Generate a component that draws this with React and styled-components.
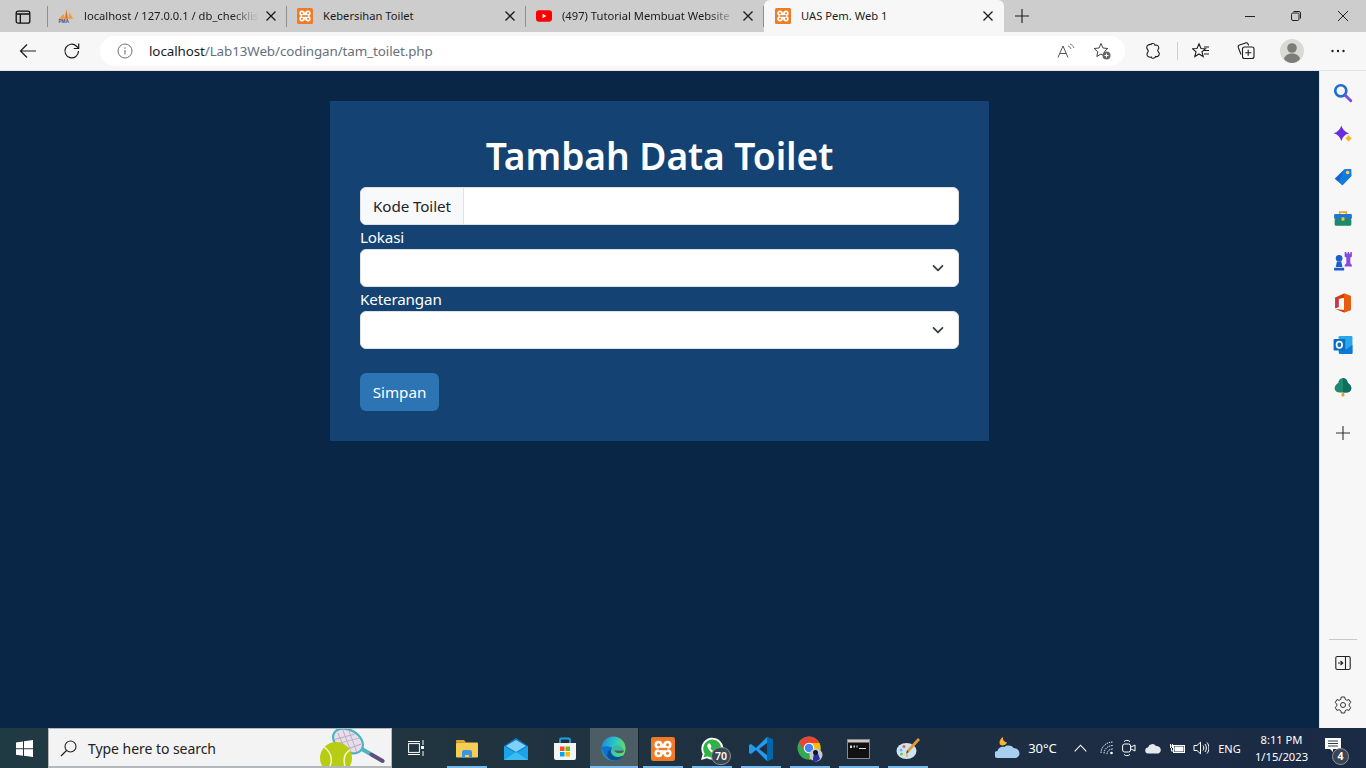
import React from "react";
import styled, { createGlobalStyle } from "styled-components";

const UI = '"Noto Sans", "Open Sans", sans-serif';

const Global = createGlobalStyle`
  html, body { margin: 0; padding: 0; height: 100%; overflow: hidden; }
  body { font-family: ${UI}; background: #0a2647; }
  * { box-sizing: border-box; }
`;

const Screen = styled.div`
  width: 1366px; height: 768px; display: flex; flex-direction: column; overflow: hidden;
`;

/* ---------- tab strip ---------- */
const TabStrip = styled.div`
  height: 32px; flex: none; background: #cdcdcd; display: flex; align-items: stretch; color: #1a1a1a;
`;
const TabMenu = styled.div`
  width: 48px; flex: none; display: flex; align-items: center; justify-content: center; padding-right: 1px;
  border-right: 1px solid #8e8e8e; margin: 6px 0 5px;
`;
const TabSlot = styled.div`
  width: ${p => p.$w}px; flex: none; height: 32px; display: flex; align-items: center; position: relative;
  padding: 0 10px 0 ${p => p.$pl}px; font-size: 11.2px;
  ${p => p.$active ? `background: #f7f7f7; border-radius: 6px 6px 0 0;` : ""}
  ${p => p.$sep ? `
    &::after { content: ""; position: absolute; right: 0; top: 6px; bottom: 5px; width: 1px; background: #8e8e8e; }
  ` : ""}
`;
const FavIcon = styled.span`
  width: 16px; height: 16px; flex: none; display: flex; align-items: center; justify-content: center; margin-right: 10px;
`;
const TabTitle = styled.span`
  flex: 1; min-width: 0; white-space: nowrap; overflow: hidden; padding-bottom: 2px;
  ${p => p.$fade ? `mask-image: linear-gradient(90deg, #000 84%, transparent 100%);` : ""}
`;
const CloseBox = styled.span`
  width: 12px; height: 12px; flex: none; display: flex; margin-left: 6px;
`;
const NewTab = styled.div`
  width: 36px; flex: none; display: flex; align-items: center; justify-content: center;
`;
const Spacer = styled.div`flex: 1;`;
const WinButtons = styled.div`display: flex; align-items: center;`;
const WinBtn = styled.div`
  width: 46px; height: 32px; display: flex; align-items: center; justify-content: center;
`;

/* ---------- toolbar ---------- */
const Toolbar = styled.div`
  height: 39px; flex: none; background: #f7f7f7; display: flex; align-items: center; padding: 0 0 1px 8px;
  border-bottom: 1px solid #e4e4e4;
`;
const ToolBtn = styled.div`
  width: ${p => p.$w || 40}px; height: 30px; flex: none; display: flex; align-items: center; justify-content: center;
  margin-left: ${p => p.$ml || 0}px;
`;
const Address = styled.div`
  width: 1025px; height: 30px; flex: none; margin-left: 4px; background: #fff; border-radius: 15px;
  display: flex; align-items: center; padding: 0 14px 0 17px; font-size: 13.4px; letter-spacing: -.09px;
`;
const Host = styled.span`color: #1a1a1a;`;
const Path = styled.span`color: #66707a;`;
const AddressText = styled.div`flex: 1; margin-left: 16px; white-space: nowrap;`;
const ToolSep = styled.div`width: 1px; height: 18px; background: #d0d0d0; flex: none;`;

/* ---------- body ---------- */
const Middle = styled.div`flex: 1; min-height: 0; display: flex;`;
const Page = styled.main`
  flex: 1; min-width: 0; background: #0a2647; display: flex; justify-content: center; align-items: flex-start; padding-top: 30px;
`;
const Card = styled.form`
  width: 659px; background: #144272; padding: 30px; color: #fff;
`;
const Title = styled.h1`
  margin: 0 0 6px; font-size: 37.2px; line-height: 50px; font-weight: 600; text-align: center; letter-spacing: -.08px;
`;
const InputGroup = styled.div`
  display: flex; height: 38px; background: #fff; border: 1px solid #dee2e6; border-radius: 6px; overflow: hidden;
`;
const Addon = styled.span`
  display: flex; align-items: center; padding: 0 12px; background: #f8f9fa; border-right: 1px solid #dee2e6;
  color: #212529; font-size: 15.2px; letter-spacing: -.1px; white-space: nowrap;
`;
const FieldInput = styled.input`flex: 1; border: 0; outline: 0; background: transparent;`;
const Label = styled.label`
  display: block; height: 24px; font-size: 15.2px; line-height: 24px; letter-spacing: -.15px;
`;
const SelectBox = styled.div`
  height: 38px; background: #fff; border: 1px solid #dee2e6; border-radius: 6px; display: flex; align-items: center;
  justify-content: flex-end; padding-right: 14px;
`;
const SubmitBtn = styled.button`
  display: block; margin-top: 24px; height: 38px; width: 79px; background: #2c74b3; border: 0; border-radius: 6px;
  color: #fff; font-family: inherit; font-size: 15.2px; padding: 0;
`;

/* ---------- edge sidebar ---------- */
const Sidebar = styled.aside`
  width: 47px; flex: none; background: #f7f7f7; border-left: 1px solid #e2e2e2; display: flex; flex-direction: column;
  align-items: center; padding: 1px 0 2px;
`;
const SideBtn = styled.div`
  width: 42px; height: 42px; flex: none; display: flex; align-items: center; justify-content: center;
  margin-top: ${p => p.$mt || 0}px;
`;
const SideRule = styled.div`width: 28px; height: 1px; background: #c9c9c9; flex: none; margin-top: auto; margin-bottom: 2px;`;

/* ---------- taskbar ---------- */
const Taskbar = styled.footer`
  height: 40px; flex: none; display: flex; align-items: stretch; color: #fff;
  background: linear-gradient(90deg, #203a44 0%, #20343f 35%, #1e2f42 65%, #1b2a45 100%);
`;
const StartBtn = styled.div`width: 48px; flex: none; display: flex; align-items: center; justify-content: center;`;
const SearchBox = styled.div`
  width: 344px; flex: none; background: #f3f3f3; border: 1px solid #b5b8ba; border-bottom-width: 2px; display: flex; align-items: center;
  padding: 1px 0 0 11px; color: #222; font-size: 14px; position: relative; letter-spacing: -.05px; overflow: hidden;
`;
const SearchText = styled.span`margin-left: 11px;`;
const SearchArt = styled.svg`position: absolute; right: 5px; bottom: 0;`;
const TaskViewBtn = styled.div`width: 51px; padding-right: 3px; flex: none; display: flex; align-items: center; justify-content: center;`;
const AppCell = styled.div`
  width: ${p => p.$active ? 48 : 49}px; flex: none; display: flex; align-items: center; justify-content: center; position: relative;
  padding: 1px 2px 0 0;
  ${p => p.$active ? `background: #4d5d66; box-shadow: 1px 0 0 #16242f; margin-right: 1px;` : ""}
  ${p => p.$open ? `
    &::after { content: ""; position: absolute; bottom: 0; height: 2px; background: #76b9ed;
      left: ${p.$active ? 0 : 4}px; right: ${p.$active ? 0 : 5}px; }
  ` : ""}
`;
const Badge = styled.span`
  position: absolute; left: 23px; bottom: 3px; width: 20px; height: 18px; border-radius: 9px; background: #3a4650;
  border: 1px solid #8a9299; color: #fff; font-size: 10.5px; line-height: 16px; text-align: center; font-weight: 600;
`;
const Tray = styled.div`margin-left: auto; display: flex; align-items: center; height: 100%;`;
const TrayItem = styled.div`
  width: ${p => p.$w}px; flex: none; height: 100%; display: flex; align-items: center; justify-content: center;
  font-size: ${p => p.$fs || 12}px; white-space: nowrap;
  margin-left: ${p => p.$ml || 0}px; margin-right: ${p => p.$mr || 0}px;
`;
const Clock = styled.div`
  width: 81px; flex: none; text-align: center; font-size: 11.2px; line-height: 17px; padding-bottom: 1px;
`;
const NotifyBtn = styled.div`
  width: 39px; flex: none; height: 100%; position: relative; display: flex; align-items: center; justify-content: center;
`;
const NotifyBadge = styled.span`
  position: absolute; right: 12px; bottom: 3px; width: 17px; height: 17px; border-radius: 50%; background: #3b4450; border: 1px solid #8d959c;
  font-size: 10.5px; font-weight: 700; line-height: 15px; text-align: center;
`;
const ShowDesktop = styled.div`width: 5px; flex: none; border-left: 1px solid #6f7a85;`;

/* ---------- icons ---------- */
const Svg = ({ s = 16, w, h, v, children, ...r }) => (
  <svg width={w || s} height={h || s} viewBox={v || `0 0 ${s} ${s}`} fill="none" {...r}>{children}</svg>
);
const Si = ({ children }) => <Svg w={20} h={20} v="0 0 18 18">{children}</Svg>;
const XIcon = () => <Svg s={12}><path d="M1.5 1.5l9 9M10.500 1.500l-9 9" stroke="#1a1a1a" strokeWidth="1.3" /></Svg>;
const Xampp = ({ s = 16 }) => (
  <Svg s={s} v="0 0 16 16">
    <rect width="16" height="16" rx="1.5" fill="#ef7b26" />
    <g fill="#fff">
      <circle cx="5" cy="5.200" r="2.700" /><circle cx="11" cy="5.200" r="2.700" />
      <circle cx="5" cy="10.800" r="2.700" /><circle cx="11" cy="10.800" r="2.700" />
      <rect x="5" y="4.500" width="6" height="7" />
    </g>
    <g fill="#ef7b26">
      <circle cx="5" cy="5.200" r="1" /><circle cx="11" cy="5.200" r="1" />
      <circle cx="5" cy="10.800" r="1" /><circle cx="11" cy="10.800" r="1" />
      <rect x="5" y="7.200" width="6" height="1.600" />
    </g>
  </Svg>
);
const Pma = () => (
  <Svg w={17} h={16} v="0 0 17 16">
    <path d="M1 11l5-5 1 5zM6.500 11L9 1l2 10zM11 11l1-7 4 7z" fill="#f29a2e" />
    <path d="M9 1l1 10H8z" fill="#e2701c" />
    <text x="0.500" y="15.600" fontSize="5" fontWeight="700" fill="#3d4f8a" fontFamily="Liberation Sans">PMA</text>
  </Svg>
);
const Yt = () => (
  <Svg w={17} h={12} v="0 0 17 12">
    <rect width="17" height="12" rx="3" fill="#f00" />
    <path d="M7 3.500L11 6 7 8.500z" fill="#fff" />
  </Svg>
);
const Avatar = () => (
  <Svg s={24}>
    <circle cx="12" cy="12" r="12" fill="#d9d9d6" />
    <circle cx="12" cy="9" r="4.800" fill="#7d7d78" />
    <path d="M4 20c1-4 4.500-5.500 8-5.500s7 1.500 8 5.500c-2 2.500-5 4-8 4s-6-1.500-8-4z" fill="#7d7d78" />
  </Svg>
);
function Chevron() {
  return <Svg s={12}><path d="M1.500 3.800L6 8.300l4.500-4.500" stroke="#343a40" strokeWidth="1.700" strokeLinecap="round" strokeLinejoin="round" /></Svg>;
}

function Tab({ w, pl = 11, icon, title, active, sep, fade }) {
  return (
    <TabSlot $w={w} $pl={pl} $active={active} $sep={sep}>
      <FavIcon>{icon}</FavIcon>
      <TabTitle $fade={fade}>{title}</TabTitle>
      <CloseBox><XIcon /></CloseBox>
    </TabSlot>
  );
}

const stroke = { stroke: "#1c1c1c", strokeWidth: 1.1 };

const SideIcons = [
  <Si key="s">
    <circle cx="7" cy="7" r="5" stroke="#1a6fd8" strokeWidth="2.400" />
    <path d="M11 11l5 5" stroke="#7a4de0" strokeWidth="2.600" strokeLinecap="round" />
  </Si>,
  <Si key="c">
    <path d="M7.500.5Q9 6 14.500 7.500 9 9 7.500 14.500 6 9 .5 7.500 6 6 7.500.5z" fill="#6b2be0" />
    <path d="M14 9.500c.3 1.600.9 2.200 2.500 2.500-1.600.3-2.200.9-2.500 2.500-.3-1.600-.9-2.200-2.500-2.500 1.600-.3 2.200-.9 2.500-2.500z" fill="#f5b21a" stroke="#f5b21a" />
  </Si>,
  <Si key="t">
    <path d="M1.500 10.500L10 2.200l6.300-.5.200 6.500-8 8.300z" fill="#1565cf" />
    <path d="M10 2.200l6.300-.5.200 6.500-8 8.300-3-3z" fill="#0f7de0" />
    <circle cx="13.200" cy="5" r="1.600" fill="#fbd24e" />
  </Si>,
  <Si key="b">
    <path d="M6 5V2.800h6V5" stroke="#e8a92e" strokeWidth="1.400" />
    <rect x="1" y="4.500" width="16" height="4.500" rx="1" fill="#1f78c8" />
    <rect x="1.500" y="9" width="15" height="6" rx="1" fill="#1a8a6a" />
    <rect x="7.700" y="7.500" width="2.600" height="3" fill="#f4c430" />
  </Si>,
  <Si key="g">
    <circle cx="5.500" cy="6.500" r="3" fill="#1a5fcb" />
    <path d="M3.500 9.500h4l1 5H2.500zM1 15h9v2.500H1z" fill="#1a5fcb" />
    <path d="M10.500 1h1.500v1.200h1.200V1h1.200v1.200h1.200V1H17v4l-1.400 1v5l1.400 1.500V14h-6.500v-1.500L12 11V6l-1.500-1z" fill="#8a4ae0" />
  </Si>,
  <Si key="o">
    <path d="M2 4l8-3.500 6 2.200v12.600l-6 2.200-8-3.200 8 1V4.200L5 5.400v7.200L2 13.800z" fill="#d83b01" />
    <path d="M2 4l3 1.400v7.200l-3 1.200z" fill="#c43454" />
    <path d="M10 .5l6 2.200v12.600l-6 2.200z" fill="#ea5a0f" />
  </Si>,
  <Si key="u">
    <rect x="5" y="1" width="12.500" height="15.500" rx="1" fill="#28a8ea" />
    <path d="M5.500 9l6 4 6-4v8h-12z" fill="#0f78d4" />
    <rect x="0.500" y="3.500" width="10.500" height="10.500" rx="1" fill="#0f6cbd" />
    <ellipse cx="5.700" cy="8.800" rx="2.500" ry="2.900" stroke="#fff" strokeWidth="1.500" />
  </Si>,
  <Si key="tr">
    <path d="M9 1c2.500 0 4 2 4.300 4.300 2 1 3.400 3 3.200 5.200-.2 2-2 3.500-4.500 3.500H6c-2.500 0-4.300-1.500-4.500-3.500-.2-2.200 1.200-4.200 3.200-5.200C5 3 6.500 1 9 1z" fill="#1b8a70" />
    <path d="M9 1c2.500 0 4 2 4.300 4.300 2 1 3.400 3 3.200 5.200-.2 2-2 3.500-4.500 3.500H9z" fill="#0f6f5c" />
    <rect x="7.800" y="14" width="2.400" height="3.500" fill="#e8a030" />
  </Si>,
];

const apps = [
  { k: "explorer", open: true, icon: (
    <Svg w={22} h={20} v="0 0 22 20">
      <path d="M0 2a1 1 0 011-1h7l2 2.500H0z" fill="#e6a823" />
      <rect y="3.500" width="22" height="15" rx="1" fill="#f8cd55" />
      <path d="M6 13a2 2 0 012-2h6a2 2 0 012 2v6H13v-3H9v3H6z" fill="#3a96dd" />
    </Svg>) },
  { k: "mail", icon: (
    <Svg w={24} h={24} v="0 0 24 24">
      <path d="M0 9L12 1l12 8v14H0z" fill="#0f78d4" />
      <path d="M2 9l10-6 10 6-10 6z" fill="#7fd0f5" />
      <path d="M0 9l12 7 12-7v14H0z" fill="#19a3e8" />
      <path d="M0 23l12-8 12 8z" fill="#3dbcf2" />
    </Svg>) },
  { k: "store", icon: (
    <Svg w={24} h={24} v="0 0 24 24">
      <path d="M7 6V3a1.500 1.500 0 011.500-1.500h7A1.500 1.500 0 0117 3v3" stroke="#1aa3e0" strokeWidth="1.800" />
      <path d="M1 6h22v15a2 2 0 01-2 2H3a2 2 0 01-2-2z" fill="#f4f4f4" />
      <rect x="7" y="9.500" width="4.500" height="4.500" fill="#f25022" />
      <rect x="12.500" y="9.500" width="4.500" height="4.500" fill="#7fba00" />
      <rect x="7" y="15" width="4.500" height="4.500" fill="#00a4ef" />
      <rect x="12.500" y="15" width="4.500" height="4.500" fill="#ffb900" />
    </Svg>) },
  { k: "edge", active: true, open: true, icon: (
    <Svg s={25}>
      <defs>
        <linearGradient id="eg" x1="0" y1="0" x2="1" y2=".3"><stop offset="0" stopColor="#1a86dc" /><stop offset=".55" stopColor="#2cc3c8" /><stop offset="1" stopColor="#62dc68" /></linearGradient>
      </defs>
      <circle cx="12.500" cy="12.500" r="12" fill="url(#eg)" />
      <path d="M1 11c0 7 5 13.500 12 13.500 4 0 7.500-2 9.500-5-3 2-7 2.500-10 .5-3-2-3.500-6-1-8-3-2-8-2-10.500-1z" fill="#1172cc" />
      <path d="M10 13c-1 3 .5 6 3.500 7.500 3 1 6.500.3 9-1-2 3-5.500 5-9 5-2.500 0-4.500-1-6-2.500C5 19 6.500 14.500 10 13z" fill="#0a4f96" />
      <path d="M11 12.500c1-3 5-4 8-2.500 2 1 4 3 3.500 4.500H14c-1.500 0-3 0-3-2z" fill="#3db8a4" />
      <path d="M13 14.500h10c0 1-1 2.500-3 2.500-3 .5-6-.5-7-2.500z" fill="#4d5d66" />
    </Svg>) },
  { k: "xampp", open: true, icon: <Xampp s={24} /> },
  { k: "wa", open: true, badge: "70", icon: (
    <Svg s={24}>
      <path d="M1 23l1.700-6A11 11 0 1 1 7 21.300z" fill="#fff" />
      <path d="M3.500 20.500l1.200-4A9 9 0 1 1 7.600 19.300z" fill="#2fb344" />
      <path d="M8.500 6.500c-1 .7-1.500 2-1 3.500 1 3 4 6 7 7 1.500.4 3-.2 3.500-1.500l-2.500-2-1.500 1c-1.500-.7-3-2-3.500-3.500l1-1.500-1.500-3z" fill="#fff" />
    </Svg>) },
  { k: "vscode", open: true, icon: (
    <Svg s={26}>
      <path d="M19 1L8 12 3 8 1 9v8l2 1 5-4 11 11 6-2.500v-19z" fill="#1f9cf0" />
      <path d="M19 7v12l-8-6z" fill="#1e2f42" />
      <path d="M19 1l6 2.500v19L19 25z" fill="#0065a9" />
    </Svg>) },
  { k: "chrome", open: true, icon: (
    <Svg s={26}>
      <circle cx="12" cy="12" r="11.500" fill="#34a853" />
      <path d="M12 .5A11.500 11.500 0 002 6.500L7 14 12 7h10.500A11.500 11.500 0 0012 .5z" fill="#ea4335" />
      <path d="M22.500 7H12l5 4-5 12.500A11.500 11.500 0 0022.500 7z" fill="#fbbc05" />
      <circle cx="12" cy="12" r="5.300" fill="#fff" /><circle cx="12" cy="12" r="4.200" fill="#4285f4" />
      <circle cx="19" cy="19" r="6.500" fill="#c7c9d4" />
      <path d="M16 25c0-5 1-9 3-9s3 4 4 7c-2 2-5 3-7 2z" fill="#2233aa" />
      <circle cx="18.500" cy="16.500" r="2.500" fill="#17171f" />
    </Svg>) },
  { k: "cmd", open: true, icon: (
    <Svg w={23} h={20} v="0 0 23 20">
      <rect x=".5" y=".5" width="22" height="19" fill="#111" stroke="#8a8a8a" />
      <rect x="1" y="1" width="21" height="2.500" fill="#c9c9c9" />
      <path d="M3 6.500h2v2.500H3zM6.500 6.500H8v2H6.500zM9.500 6.500h1v2h-1zM12 9h7v1h-7z" fill="#ddd" />
    </Svg>) },
  { k: "paint", open: true, icon: (
    <Svg s={24}>
      <ellipse cx="10.500" cy="14" rx="10" ry="8" fill="#cfe3f2" />
      <circle cx="5" cy="13" r="1.500" fill="#6fb7e8" />
      <circle cx="8" cy="9.500" r="1.500" fill="#ea5b5b" />
      <circle cx="5.500" cy="17" r="1.500" fill="#7cc35f" />
      <circle cx="11" cy="18.500" r="1.300" fill="#f1b23e" />
      <path d="M22 1L11 13l2 2L24 3z" fill="#e29b34" />
      <path d="M11 13l2 2-3 2z" fill="#6d4622" />
    </Svg>) },
];

export default function App() {
  return (
    <Screen>
      <Global />
      <TabStrip>
        <TabMenu>
          <Svg s={16}>
            <rect x="1.200" y="2.200" width="13.600" height="12" rx="2" stroke="#111" strokeWidth="1.300" />
            <path d="M1.500 5h13M5.300 5v9" stroke="#111" strokeWidth="1.300" />
          </Svg>
        </TabMenu>
        <Tab w={239} pl={10} icon={<Pma />} title="localhost / 127.0.0.1 / db_checklist" sep fade />
        <Tab w={239} pl={10} icon={<Xampp />} title="Kebersihan Toilet" sep />
        <Tab w={238} pl={10} icon={<Yt />} title="(497) Tutorial Membuat Website" sep fade />
        <Tab w={240} pl={11} active icon={<Xampp />} title="UAS Pem. Web 1" />
        <NewTab>
          <Svg s={16}><path d="M8 1v14M1 8h14" stroke="#1a1a1a" strokeWidth="1.100" /></Svg>
        </NewTab>
        <Spacer />
        <WinButtons>
          <WinBtn><Svg s={12}><path d="M0 6.500h10" stroke="#222" /></Svg></WinBtn>
          <WinBtn>
            <Svg s={12}>
              <rect x=".5" y="3" width="7.500" height="7.500" rx="1.500" stroke="#222" />
              <path d="M2.500 1.500H8A1.500 1.500 0 019.500 3v5.500" stroke="#222" />
            </Svg>
          </WinBtn>
          <WinBtn><Svg s={12}><path d="M1 1l10 10M11 1L1 11" stroke="#222" /></Svg></WinBtn>
        </WinButtons>
      </TabStrip>

      <Toolbar>
        <ToolBtn>
          <Svg s={18}><path d="M17 9H1.500M8 2.500L1.500 9 8 15.500" stroke="#1c1c1c" strokeWidth="1.200" /></Svg>
        </ToolBtn>
        <ToolBtn $w={48}>
          <Svg s={18}>
            <path d="M15.500 9a6.800 6.800 0 11-2-4.800L15.500 6.200" stroke="#1c1c1c" strokeWidth="1.200" />
            <path d="M15.700 1.500v5h-5" stroke="#1c1c1c" strokeWidth="1.200" />
          </Svg>
        </ToolBtn>
        <Address>
          <Svg s={16}>
            <circle cx="8" cy="8" r="7" stroke="#6f6f6f" />
            <path d="M8 7v4.500M8 4.300v1.400" stroke="#6f6f6f" strokeWidth="1.100" />
          </Svg>
          <AddressText><Host>localhost</Host><Path>/Lab13Web/codingan/tam_toilet.php</Path></AddressText>
          <Svg w={18} h={16} v="0 0 18 16" style={{ marginRight: 18 }}>
            <path d="M1 14.500L6 3l5 11.500M2.800 10.500h6.400" stroke="#555" />
            <path d="M11 3c1.500.5 2.500 1.500 3 3M13 1c2 .7 3.200 2 4 4" stroke="#777" />
          </Svg>
          <Svg s={18}>
            <path d="M8 1.500l2 4.500 4.800.5-3.600 3.200 1 4.800L8 12l-4.200 2.500 1-4.800L1.200 6.500 6 6z" stroke="#444" />
            <circle cx="13.500" cy="13.500" r="4" fill="#666" />
            <path d="M13.500 11.500v4M11.500 13.500h4" stroke="#fff" />
          </Svg>
        </Address>
        <ToolBtn $w={46} $ml={5}>
          <Svg s={18}>
            <path d="M7 2.500C7 1 11 1 11 3.200c2.200-.5 3.800.6 3.800 2.700 0 1.100-1.100 1.600-1.100 2.700s1.600 1.600 1.600 3.200c0 2.200-2.200 3.200-3.800 2.700 0 2.200-4.300 2.200-4.300.5-1.600.5-4.300 0-4.300-2.700 0-1.400 1.400-2.200 1.400-3.200S2.700 7 2.700 5.400C2.700 3.200 5.400 2 7 2.500z" {...stroke} />
          </Svg>
        </ToolBtn>
        <ToolBtn $w={2}><ToolSep /></ToolBtn>
        <ToolBtn $w={46}>
          <Svg s={18}>
            <path d="M7 1.800L9 6.500l4.500.3-3.500 3 1.200 4.700L7 12l-4.200 2.500L4 9.800.5 6.800 5 6.500z" {...stroke} />
            <path d="M12 5h5M12 8.500h5M12 12h5" {...stroke} />
          </Svg>
        </ToolBtn>
        <ToolBtn $w={44}>
          <Svg s={18}>
            <path d="M4 12.500L1.300 5.500a2 2 0 011.200-2.500l6-2.100c1-.3 2 0 2.400.9l.8 1.700" {...stroke} />
            <rect x="5.500" y="5" width="11.500" height="11.500" rx="2" {...stroke} />
            <path d="M11.200 7.700v6M8.300 10.700h6" {...stroke} />
          </Svg>
        </ToolBtn>
        <ToolBtn $w={48}><Avatar /></ToolBtn>
        <ToolBtn $w={44}>
          <Svg w={16} h={4} v="0 0 16 4"><circle cx="2.500" cy="2" r="1.200" fill="#222" /><circle cx="8" cy="2" r="1.200" fill="#222" /><circle cx="13.500" cy="2" r="1.200" fill="#222" /></Svg>
        </ToolBtn>
      </Toolbar>

      <Middle>
        <Page>
          <Card>
            <Title>Tambah Data Toilet</Title>
            <InputGroup>
              <Addon>Kode Toilet</Addon>
              <FieldInput aria-label="Kode Toilet" />
            </InputGroup>
            <Label>Lokasi</Label>
            <SelectBox><Chevron /></SelectBox>
            <Label>Keterangan</Label>
            <SelectBox><Chevron /></SelectBox>
            <SubmitBtn type="button">Simpan</SubmitBtn>
          </Card>
        </Page>
        <Sidebar>
          {SideIcons.map(i => <SideBtn key={i.key}>{i}</SideBtn>)}
          <SideBtn $mt={4}><Svg s={14}><path d="M7 0v14M0 7h14" stroke="#333" strokeWidth="1.100" /></Svg></SideBtn>
          <SideRule />
          <SideBtn>
            <Svg s={16}>
              <rect x=".8" y="1.500" width="14.400" height="13" rx="1.500" stroke="#222" strokeWidth="1.100" />
              <path d="M10.500 1.500v13M3 8h4.500M5.500 5.800L7.800 8l-2.300 2.200" stroke="#222" strokeWidth="1.100" />
            </Svg>
          </SideBtn>
          <SideBtn>
            <Svg s={18}>
              <path d="M7.300 1h3.400l.5 2.300 1.700 1 2.200-.7 1.700 3-1.700 1.500v1.800l1.700 1.500-1.700 3-2.200-.7-1.700 1-.5 2.300H7.300l-.5-2.300-1.700-1-2.200.7-1.700-3 1.700-1.500V8.100L1.200 6.600l1.700-3 2.200.7 1.700-1z" stroke="#333" />
              <circle cx="9" cy="9" r="2.500" stroke="#333" />
            </Svg>
          </SideBtn>
        </Sidebar>
      </Middle>

      <Taskbar>
        <StartBtn>
          <Svg s={17}>
            <path d="M0 2.500l7-1v6.700H0zM8 1.300L17 0v8.200H8zM0 9.200h7v6.500l-7-1zM8 9.200h9V17l-9-1.300z" fill="#fff" />
          </Svg>
        </StartBtn>
        <SearchBox>
          <Svg s={17}>
            <circle cx="10.500" cy="6.500" r="5.500" stroke="#222" strokeWidth="1.100" />
            <path d="M6.500 10.500L1 16" stroke="#222" strokeWidth="1.300" />
          </Svg>
          <SearchText>Type here to search</SearchText>
          <SearchArt width="66" height="38" viewBox="0 0 66 38" fill="none">
            <g transform="translate(28 13) rotate(30)">
              <rect x="14" y="-2" width="12" height="4" fill="#4fb4c2" />
              <rect x="25" y="-2" width="17" height="4" rx="2" fill="#5e4f82" />
              <ellipse cx="0" cy="0" rx="16" ry="11" fill="#e6dfe8" stroke="#4fb4c2" strokeWidth="2.200" />
              <path d="M-10-7L8 8M-4-9L13 5M-13-2L2 9M8-8L-8 8M2-9L-13 6M13-4L2 9" stroke="#bca9c6" strokeWidth=".9" />
            </g>
            <circle cx="16" cy="30" r="16" fill="#b7cc12" />
            <path d="M4 19c7 5 9 11 6 19M30 22c-5 3-7 9-5 16" stroke="#f4f8d0" strokeWidth="1.500" />
          </SearchArt>
        </SearchBox>
        <TaskViewBtn>
          <Svg w={16} h={16} v="0 0 16 16">
            <rect x=".6" y="3.600" width="10.800" height="8.800" stroke="#fff" />
            <path d="M0 1.500h12M0 14.500h12M15 0v5M15 11v5" stroke="#fff" />
            <rect x="13" y="6" width="3" height="3" fill="#fff" />
          </Svg>
        </TaskViewBtn>
        {apps.map(a => (
          <AppCell key={a.k} $open={a.open} $active={a.active}>
            {a.icon}
            {a.badge && <Badge>{a.badge}</Badge>}
          </AppCell>
        ))}
        <Tray>
          <TrayItem $w={36}>
            <Svg w={26} h={24} v="0 0 26 24">
              <path d="M8 1c-.5 3 1 5 4 5.500C11 9 8 10 5.500 9 3.500 7 5 2.500 8 1z" fill="#f5b32e" />
              <path d="M3 22a3.500 3.500 0 01-.5-7c.5-3 4-5 7-4 2-2 7-2 9 1 3.500 0 6 2.500 6 5.300S22.500 22 20 22z" fill="#a8cff0" />
            </Svg>
          </TrayItem>
          <TrayItem $w={34} $mr={4.500} $fs={13}>30°C</TrayItem>
          <TrayItem $w={33}>
            <Svg w={13} h={8} v="0 0 13 8"><path d="M.7 7.300L6.500 1.200l5.800 6.100" stroke="#fff" strokeWidth="1.100" /></Svg>
          </TrayItem>
          <TrayItem $w={20}>
            <Svg s={14}>
              <path d="M1 12C1 6 6 1 13 1M4 12.500C4 8 8 4.500 13 4.500M7 13c0-3 2.500-5 6-5" stroke="#dfe5ea" strokeDasharray="1.500 .8" />
              <circle cx="11.500" cy="12" r="1.300" fill="#fff" />
            </Svg>
          </TrayItem>
          <TrayItem $w={24}>
            <Svg w={14} h={18} v="0 0 14 18">
              <rect x=".6" y="5" width="8" height="8" rx="2" stroke="#fff" />
              <path d="M9 8l4-2v6l-4-2M2 2.500c1.500-1.500 4-1.500 6 0M2 15.500c1.500 1.500 4 1.500 6 0" stroke="#fff" />
            </Svg>
          </TrayItem>
          <TrayItem $w={25}>
            <Svg w={17} h={11} v="0 0 17 11"><path d="M3.500 10.500a3 3 0 01-.5-6 4.500 4.500 0 018-1.500 3.800 3.800 0 012 .3A3.800 3.800 0 0113.500 10.500z" fill="#e6e9ec" /></Svg>
          </TrayItem>
          <TrayItem $w={22}>
            <Svg w={17} h={11} v="0 0 17 11">
              <rect x="4.500" y="2.500" width="11" height="7" stroke="#fff" />
              <rect x="5.500" y="3.500" width="9" height="5" fill="#fff" />
              <path d="M1 3h3M1.500 1v4M3.500 1v4M2.500 5v3h2" stroke="#fff" />
            </Svg>
          </TrayItem>
          <TrayItem $w={26}>
            <Svg w={16} h={14} v="0 0 16 14">
              <path d="M1 4.500h3L7.500 1.200v11.600L4 9.500H1z" stroke="#fff" />
              <path d="M10 4.500c1 1.500 1 3.500 0 5M12 3c1.800 2.300 1.800 5.700 0 8M14 1.500c2.500 3 2.500 8 0 11" stroke="#fff" />
            </Svg>
          </TrayItem>
          <TrayItem $w={23} $ml={4} $fs={11}>ENG</TrayItem>
          <Clock>8:11 PM<br />1/15/2023</Clock>
          <NotifyBtn>
            <Svg w={16} h={14} v="0 0 16 14" style={{ marginBottom: 6, marginRight: 17 }}>
              <path d="M0 0h16v11H8v3l-3-3H0z" fill="#fff" />
              <path d="M3 3h10M3 5.500h10M3 8h10" stroke="#2a3a4a" />
            </Svg>
            <NotifyBadge>4</NotifyBadge>
          </NotifyBtn>
          <ShowDesktop />
        </Tray>
      </Taskbar>
    </Screen>
  );
}
